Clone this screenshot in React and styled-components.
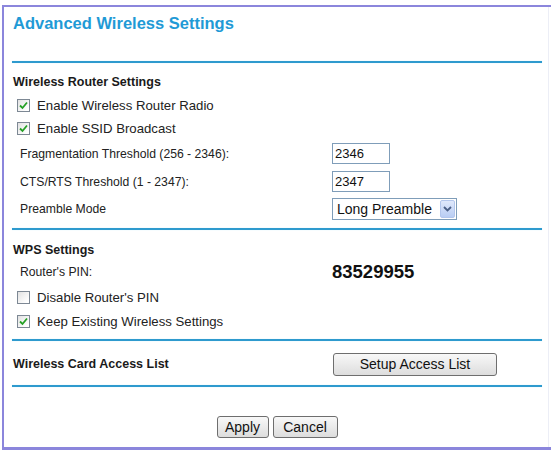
import React from "react";
import styled, { createGlobalStyle } from "styled-components";

const GlobalStyle = createGlobalStyle`
  html, body { margin: 0; padding: 0; background: #fff; }
  body { font-family: "Liberation Sans", Arial, sans-serif; color: #1a1a1a; }
`;

const Frame = styled.div`
  box-sizing: border-box;
  margin: 5px 0 0 2px;
  height: 445px;
  border-top: 2px solid #8b86dc;
  border-left: 2px solid #8b86dc;
  border-bottom: 3px solid #8b86dc;
  padding-right: 2px;
  display: flex;
`;

const Panel = styled.div`
  flex: 1;
  border-right: 1px solid #eceef6;
  padding: 0 6px 0 8px;
  display: flex;
  flex-direction: column;
`;

const Title = styled.h1`
  margin: 0;
  padding: 6px 0 0 1px;
  font-size: 16.5px;
  line-height: 20px;
  font-weight: bold;
  color: #1f9ad6;
`;

const Rule = styled.div`
  height: 2px;
  background: #2e9ace;
  margin-top: ${(p) => p.$mt || 0}px;
  box-shadow: 0 0 1px rgba(120, 220, 255, 0.6);
`;

const Section = styled.div`
  display: flex;
  flex-direction: column;
  margin-top: ${(p) => p.$mt || 0}px;
`;

const Row = styled.div`
  display: flex;
  align-items: center;
  height: ${(p) => p.$h}px;
`;

const Header = styled.div`
  width: 320px;
  padding-left: 1px;
  box-sizing: border-box;
  font-size: 12.5px;
  font-weight: bold;
  color: #1a1a1a;
`;

const Label = styled.div`
  width: 320px;
  padding-left: 8px;
  box-sizing: border-box;
  font-size: 12.2px;
  color: #222;
`;

const CheckLabel = styled.label`
  display: flex;
  align-items: center;
  gap: 7px;
  padding-left: 5px;
  font-size: 13.2px;
  color: #222;
`;

const Box = styled.span`
  box-sizing: border-box;
  width: 13px;
  height: 13px;
  border: 1px solid #7d8894;
  background: linear-gradient(135deg, #e2e2e2 0%, #ffffff 85%);
  display: flex;
  align-items: center;
  justify-content: center;
`;

const TextInput = styled.div`
  box-sizing: border-box;
  width: 58px;
  height: 21px;
  border: 1px solid #7f9db9;
  padding-left: 2px;
  font-size: 13px;
  line-height: 19px;
  color: #111;
`;

const Select = styled.div`
  box-sizing: border-box;
  width: 125px;
  height: 22px;
  border: 1px solid #7f9db9;
  display: flex;
  align-items: center;
  justify-content: space-between;
  padding: 0 1px 0 4px;
  font-size: 14px;
  color: #111;
`;

const ArrowBox = styled.span`
  box-sizing: border-box;
  width: 15px;
  height: 18px;
  border: 1px solid #b3c6ec;
  border-radius: 2px;
  background: linear-gradient(#dfe8fb, #b9cdf3);
  display: flex;
  align-items: center;
  justify-content: center;
`;

const Pin = styled.div`
  font-size: 18.5px;
  font-weight: bold;
  color: #111;
`;

const Button = styled.button`
  box-sizing: border-box;
  width: ${(p) => p.$w}px;
  height: ${(p) => p.$hgt || 22}px;
  margin-left: ${(p) => p.$ml || 0}px;
  border: 1px solid #6e6e6e;
  border-radius: 3px;
  background: linear-gradient(#f8f8f8, #dddddd);
  font-family: "Liberation Sans", Arial, sans-serif;
  font-size: 14px;
  color: #111;
  padding: 0;
`;

const ButtonBar = styled.div`
  display: flex;
  justify-content: center;
  gap: 4px;
  margin-top: 29px;
`;

const Check = ({ checked }) => (
  <Box>
    {checked && (
      <svg width="9" height="9" viewBox="0 0 9 9">
        <polyline
          points="1,4.5 3.5,7 8,1.5"
          fill="none"
          stroke="#25a025"
          strokeWidth="1.8"
        />
      </svg>
    )}
  </Box>
);

const CheckRow = ({ h, checked, children }) => (
  <Row $h={h}>
    <CheckLabel>
      <Check checked={checked} />
      {children}
    </CheckLabel>
  </Row>
);

export default function App() {
  return (
    <>
      <GlobalStyle />
      <Frame>
        <Panel>
          <Title>Advanced Wireless Settings</Title>
          <Rule $mt={28} />

          <Section $mt={9}>
            <Row $h={20}>
              <Header>Wireless Router Settings</Header>
            </Row>
            <CheckRow h={26} checked>
              Enable Wireless Router Radio
            </CheckRow>
            <CheckRow h={20} checked>
              Enable SSID Broadcast
            </CheckRow>
            <Row $h={31}>
              <Label>Fragmentation Threshold (256 - 2346):</Label>
              <TextInput>2346</TextInput>
            </Row>
            <Row $h={25}>
              <Label>CTS/RTS Threshold (1 - 2347):</Label>
              <TextInput>2347</TextInput>
            </Row>
            <Row $h={30}>
              <Label>Preamble Mode</Label>
              <Select>
                Long Preamble
                <ArrowBox>
                  <svg width="9" height="6" viewBox="0 0 9 6">
                    <polyline
                      points="1,1 4.5,4.5 8,1"
                      fill="none"
                      stroke="#4a5f86"
                      strokeWidth="1.8"
                    />
                  </svg>
                </ArrowBox>
              </Select>
            </Row>
          </Section>
          <Rule $mt={4} />

          <Section $mt={10}>
            <Row $h={20}>
              <Header>WPS Settings</Header>
            </Row>
            <Row $h={24}>
              <Label>Router's PIN:</Label>
              <Pin>83529955</Pin>
            </Row>
            <CheckRow h={27}>Disable Router's PIN</CheckRow>
            <CheckRow h={21} checked>
              Keep Existing Wireless Settings
            </CheckRow>
          </Section>
          <Rule $mt={7} />

          <Section $mt={2}>
            <Row $h={42}>
              <Header>Wireless Card Access List</Header>
              <Button $w={164} $hgt={23} $ml={1}>
                Setup Access List
              </Button>
            </Row>
          </Section>
          <Rule />

          <ButtonBar>
            <Button $w={52}>Apply</Button>
            <Button $w={65}>Cancel</Button>
          </ButtonBar>
        </Panel>
      </Frame>
    </>
  );
}
